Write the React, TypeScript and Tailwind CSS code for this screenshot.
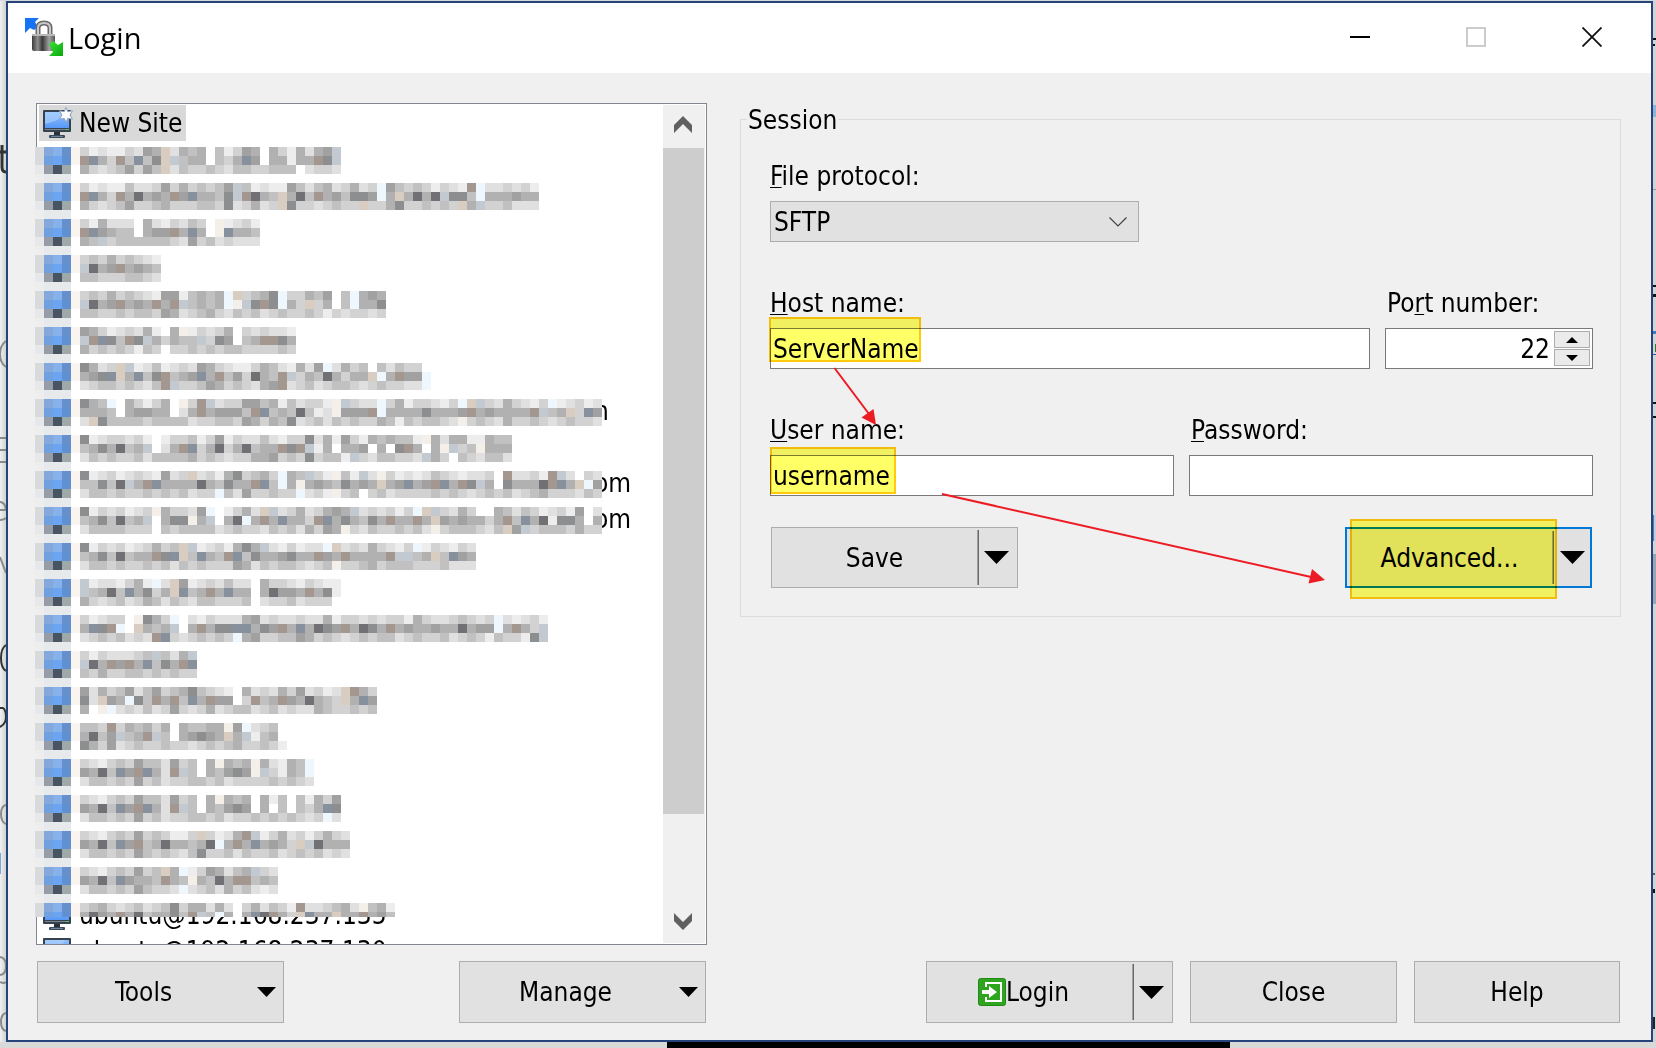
import { useState } from 'react';
import type { ReactNode } from 'react';

// one character is one 9px block of a censored entry
const blockColors: { [key: string]: string } = {
  a: '#ededed',
  b: '#e0e0e0',
  c: '#d2d2d2',
  d: '#c2c1c1',
  e: '#b1b1b1',
  f: '#a1a1a2',
  g: '#8d8e90',
  h: '#707075',
  p: '#f5efe9',
  s: '#eff7fe',
  t: '#c2c9d1',
  u: '#87919d',
  v: '#d9ccc1',
  w: '#a4978f',
};

interface Site {
  blocks: string[];
  tail?: string;
  name?: string;
}

const sites: Site[] = [
  {
    blocks: [
      'cabaacbfevbede.dacfe.ecaebeft',
      'wuecwdudgvtdee.dceuf.eeaeewgt',
      'ecbcdfcfdvbdccdcbddccddd.bccb',
    ],
  },
  {
    blocks: [
      'cabaadbbcfcecdcdftdabaafdbdebcebcsfdcdcacbawsbbcbca',
      'wuecwehefewfueedgtwhedvehdwefdggfsevehehtggdseeefee',
      'ecbcdfccdecccddcgbcebcvgccbcdccvccegccdcdcvetccdbbb',
    ],
  },
  {
    blocks: ['caebbb.ebacbdc.pabca', 'wufedd.effweue.pueed', 'edtcddddddcbfcdbcbbb'],
  },
  {
    blocks: ['cdcecdcba', 'thefwefed', 'ddcccddcb'],
  },
  {
    blocks: [
      'cdcecdcbaffadedesvcdegsccedf.dsefe',
      'thefwefewewtdedesptgwgsecvce.dseeg',
      'ddccdcddcfebcdecbdcdbcdccdcacbccbc',
    ],
  },
  {
    blocks: ['fecabcbea.epacbce.cbcbba', 'twugdwgteceddtcgf.dewwge', 'ecdcdcadc.ccdcdcddccccdc'],
  },
  {
    blocks: [
      'gebcvtabdabcbfecbaacedbaebfsbecd.dbdcc.',
      'efguveudgwdefuewdfchedwtcedheceevsewffs',
      'bcddcdcbdwtccdfecdcbefwbcdbcddcbcdccbbs',
    ],
  },
  {
    blocks: [
      'geds.ecace.pcwtbccffdeadbccaptcbbsceaccbacsvtcbecbacsabcab',
      'eeed.effee.bewefffdwudedhdabpfffwseeeegeeefwefeeeewtdevcuf',
      'bvgddddcddddbccddcfecedgbcdbdcdccedadcddcbpcdcbeccdcbcdccb',
    ],
    tail: 'm',
  },
  {
    blocks: [
      'gabccbca.accdacfacbbdbaccgbeafcaededdapebeeaaedd',
      'degehdet.bewucehcehdeewgwtae.eef.e.gwe.eptcdpeee',
      'bdcdccdbddddecdcbcceefcdcgcddatcbddccbtec.dcbddb',
    ],
  },
  {
    blocks: [
      'gabcabcbafbcvbcaegcdecsedtcapdatbpcababdcbabbc.wbbcawtb.cb',
      'ddgdhtewueeeehedgeewudsepefedgefevefuefwuewgte.geeehwuevsf',
      'bddcdccdcdcdbccsdbfccdccsbcapcd.cdbccccdcdcbcdcdbcdecccbdc',
    ],
    tail: 'om',
  },
  {
    blocks: [
      'gacbcabcpeccbfs.acebvtbcebcefetbcbcacsvtcbec..edbdcabcaf.b',
      'degdhdet.eggpet.ehseweueecwuegedgeweewevfefeecewduehagge.e',
      'bddddccc.dcddddbcdccbdcdbecfepcbdccdcdbpcdddcbdvftcdddcecc',
    ],
    tail: 'om',
  },
  {
    blocks: [
      'gacbcabcecdvtabcaegetbacabbsvbcbecbacsacbacb',
      'degdhdeewguvduedwudgeefgeewfeweeeewttdevdufe',
      'bddcdccdcdbdcdcccfebdcddcbcdpccdecdddcccdbbb',
    ],
  },
  {
    blocks: [
      'tabbaceasbvfabcbdbb.eccbacbaa',
      'tdehduegcevudeweuee.ehffewega',
      'ecbcdbcedbdcbddcccd.bccdbccc.',
    ],
  },
  {
    blocks: [
      'cabcc.pgecs.bacbbbefbcbbcbbeaccbcbccaecbbcdcbcsbabca',
      'eugws.vedet.ewegguuegfweuehgfwehgewefeefeeheffsewect',
      'bcdcdbcbwucbcdcdcsefccddfecdcbcdcddbcdccdbcdcadccagt',
    ],
  },
  {
    blocks: ['cacbbbcdtdbet', 'thewfweudgewu', 'dceccddcdcdcc'],
  },
  {
    blocks: [
      'fbecdfbdfcdegdcba.ebcbecfbcabvwec',
      'gbvfesgdwewduewff.cwdewfehedcveuf',
      'e.psbcbdbcfcbcebcddbcdbcbbedccdcd',
    ],
  },
  {
    blocks: ['ddcwcedece.eddeepfsbcd.', 'ehdftdewtd.efgfevetade.', 'gecfbcdccdccbcdcdeccdca'],
  },
  {
    blocks: ['cbacdcfddbfcd.epedepebaeds', 'fehdufwuebwtd.edfgfptcaeds', 'bddcdcfcdbccddcdbccccdcdcb'],
  },
  {
    blocks: [
      'cbacdcfddbfcd.epede.ead.daecf',
      'fehdufwuebwtd.edfgf.e.d.dceug',
      'bddcdcfcdbccddcdbccdcdcdcbcsb',
    ],
  },
  {
    blocks: [
      'cbacdcfcdcaacvcabewtacebcacecb',
      'fehdufwdeheedehseweuefecvtheee',
      'bddcdcfdcdcbdgccdbdccdbcdcdbcb',
    ],
  },
  {
    blocks: ['cbacdcfcdvesacfebdetcb', 'fehdufeedwedpedhewwded', 'bddcdcfdccbsbcdbecdbab'],
  },
  {
    blocks: ['cdecbcdbcdgceebeb.cebdcawbbcdebpdea', 'ehfewehdeegdwtdse.euhwecvueeveewefd'],
    name: 'ubuntu@192.168.237.135',
  },
];

// the censored monitor icon, same blocks on every row
const iconBlocks = [
  ['#d8dadb', '#85a8dc', '#87b1ea', '#6690cb'],
  ['#d8dadb', '#70a0df', '#6ba4f0', '#6190d0'],
  ['#e6e8ea', '#979da6', '#485461', '#a0a9aa'],
  ['#eeeeee', '#e7eaec', '#e7e9eb', '#e7eaec'],
];

function Mosaic({ blocks, height }: { blocks: string[]; height: number }) {
  const cols = blocks[0].length;
  const width = (cols + 5) * 9;
  return (
    <svg
      aria-hidden="true"
      width={width}
      height={height}
      viewBox={`0 0 ${width} ${height}`}
      shapeRendering="crispEdges"
      className="relative z-10 mt-1.5 block shrink-0 max-w-none"
    >
      <rect width={width} height={height} fill="#ffffff" />
      {iconBlocks.map((line, y) =>
        line.map((fill, x) => <rect key={`${x}-${y}`} x={x * 9} y={y * 9} width="9" height="9" fill={fill} />),
      )}
      <rect x="36" y="0" width="9" height="18" fill="#f9f4f0" />
      {blocks.map((line, y) =>
        line
          .split('')
          .map((c, x) =>
            c === '.' ? null : (
              <rect key={`${x}-${y}`} x={45 + x * 9} y={y * 9} width="9" height="9" fill={blockColors[c]} />
            ),
          ),
      )}
    </svg>
  );
}

function MonitorIcon({ star }: { star?: boolean }) {
  return (
    <svg width="30" height="32" viewBox="0 0 30 32" className="shrink-0">
      <defs>
        <linearGradient id="screen" x1="0" y1="0" x2="0" y2="1">
          <stop offset="0" stopColor="#8fc0fb" />
          <stop offset="1" stopColor="#5898f6" />
        </linearGradient>
      </defs>
      <rect x="0" y="3" width="28" height="22" rx="1" fill="#36424f" />
      <rect x="2" y="5" width="24" height="16" fill="url(#screen)" />
      <path d="M2 5h20C20 12 10 15 2 17z" fill="#b0d4ff" opacity=".6" />
      <rect x="2" y="22" width="24" height="1" fill="#7a838d" />
      <rect x="23" y="22" width="3" height="1" fill="#52d048" />
      <rect x="11" y="25" width="6" height="3" fill="#27313c" />
      <rect x="6" y="28" width="16" height="3" rx="1" fill="#3a4857" />
      <rect x="8" y="29" width="12" height="1" fill="#71869c" />
      {star && (
        <path
          d="M23 .5l1.800 4.200 4.700-.900-2.500 4.200 2.500 4.200-4.700-.900L23 15.500l-1.800-4.200-4.700.900L19 8l-2.500-4.200 4.700.900z"
          fill="#ffffff"
          stroke="#8da4c4"
          strokeWidth="1"
        />
      )}
    </svg>
  );
}

function AppIcon() {
  return (
    <svg width="40" height="40" viewBox="0 0 40 40">
      <defs>
        <linearGradient id="body" x1="0" y1="0" x2="1" y2="0">
          <stop offset="0" stopColor="#3c3c3c" />
          <stop offset=".25" stopColor="#8f8f8f" />
          <stop offset=".45" stopColor="#3a3a3a" />
          <stop offset=".75" stopColor="#a3a3a3" />
          <stop offset="1" stopColor="#555555" />
        </linearGradient>
        <linearGradient id="green" x1="0" y1="0" x2="1" y2="1">
          <stop offset="0" stopColor="#3ee23a" />
          <stop offset="1" stopColor="#06a808" />
        </linearGradient>
      </defs>
      <path d="M1 0h14l-4 4 3 5-4 3-4-2-5 5z" fill="#1673f5" />
      <path d="M14 18V10q0-5 6-5t6 5v8" fill="none" stroke="#6a6a6a" strokeWidth="5" />
      <path d="M14 18V10q0-5 6-5t6 5v8" fill="none" stroke="#c9c9c9" strokeWidth="2" />
      <rect x="8" y="16" width="23" height="17" rx="2" fill="url(#body)" />
      <rect x="8" y="16" width="23" height="2" rx="1" fill="#b8b8b8" />
      <path d="M25 26l4-3 5 4 5-3v14H25l4-4z" fill="url(#green)" />
    </svg>
  );
}

function LoginIcon() {
  return (
    <svg width="28" height="28" viewBox="0 0 28 28" className="shrink-0">
      <rect x=".5" y=".5" width="27" height="27" rx="2" fill="#2fa51f" stroke="#228a17" />
      <path d="M8 9V5h15v18H8v-4" fill="none" stroke="#ffffff" strokeWidth="2" />
      <path d="M4 12h7V8l8 6-8 6v-4H4z" fill="#ffffff" />
    </svg>
  );
}

function Triangle({ small }: { small?: boolean }) {
  return small ? (
    <svg width="19" height="10" viewBox="0 0 19 10">
      <path d="M0 0h19L9.500 10z" fill="#000000" />
    </svg>
  ) : (
    <svg width="25" height="13" viewBox="0 0 25 13">
      <path d="M0 0h25L12.500 13z" fill="#000000" />
    </svg>
  );
}

function MenuButton({ label }: { label: string }) {
  return (
    <button className="flex h-[62px] w-[247px] items-center border border-[#adadad] bg-[#e1e1e1]">
      <span className="flex-1 text-center">{label}</span>
      <span className="flex w-[34px] justify-center">
        <Triangle small />
      </span>
    </button>
  );
}

function SplitButton({ label, icon, focused }: { label: string; icon?: ReactNode; focused?: boolean }) {
  return (
    <div
      className={`flex w-[247px] bg-[#e1e1e1] ${icon ? 'h-[62px]' : 'h-[61px]'} ${
        focused ? 'border-2 border-[#0078d7]' : 'border border-[#adadad]'
      }`}
    >
      <button className={`flex flex-1 items-center justify-center ${icon ? 'pr-3' : ''}`}>
        {icon}
        {label}
      </button>
      <span className="my-0.5 w-0.5 border-l border-[#a0a0a0] bg-[#696969]" />
      <button
        aria-label={`${label} options`}
        className={`flex items-center justify-center ${focused ? 'w-9' : 'w-[38px] pr-1'}`}
      >
        <Triangle />
      </button>
    </div>
  );
}

// underlines the access key of a label
function Label({ htmlFor, before = '', letter, after }: { htmlFor: string; before?: string; letter: string; after: string }) {
  return (
    <label htmlFor={htmlFor} className="mb-2.5 block leading-[30px]">
      {before}
      <span className="underline decoration-1 underline-offset-2">{letter}</span>
      {after}
    </label>
  );
}

const inputClass = 'block h-[41px] w-full border border-[#7a7a7a] bg-white px-0.5 outline-none';
const markClass = 'pointer-events-none absolute border-2 border-[#ffc90e] bg-[#ffff66] mix-blend-multiply';

export default function App() {
  const [protocol, setProtocol] = useState('SFTP');
  const [host, setHost] = useState('ServerName');
  const [port, setPort] = useState('22');
  const [user, setUser] = useState('username');
  const [password, setPassword] = useState('');

  return (
    <div className="flex h-screen flex-col overflow-hidden bg-[#e4e4e4] font-['DejaVu_Sans_Condensed','DejaVu_Sans',sans-serif] text-[26px] leading-[30px] text-black">
      <div className="h-px shrink-0 bg-[#d5d9dc]" />
      <div className="flex min-h-0 flex-1">
        {/* Page behind, left edge */}
        <div className="w-1.5 shrink-0 overflow-hidden bg-gradient-to-r from-[#f0f0f0] to-[#d2d2d2]">
          <svg aria-hidden="true" width="6" height="1041" viewBox="0 0 6 1041" fill="none" strokeWidth="2">
            <g stroke="#333333">
              <path d="M0 151h6M2 144v22q0 5 4 5" strokeWidth="3" />
              <path d="M6 644q-5 3-5 13t5 13" />
              <path d="M0 707h3q3 2 3 9t-6 10" />
            </g>
            <g stroke="#8a8a8a">
              <path d="M6 340q-6 4-6 13t6 13" />
              <path d="M0 437h6M0 449h6M0 461h6" />
              <path d="M0 501q5 0 6 8H0M0 519q4 0 6-2" />
              <path d="M0 556l6 16" />
              <path d="M6 804q-5 1-5 9t5 10" />
              <path d="M0 956q6 1 6 9t-6 9M0 981q4 2 6 0" />
              <path d="M6 1012q-5 1-5 9t5 9" />
            </g>
            <rect y="852" width="1" height="21" fill="#7ea6dc" />
          </svg>
        </div>

        {/* Dialog */}
        <div className="flex min-w-0 flex-1 flex-col border-2 border-[#26447c] bg-[#f0f0f0]">
          {/* Title bar */}
          <header className="flex h-[70px] shrink-0 items-center bg-white pr-px pl-4">
            <AppIcon />
            <h1 className="flex-1 pl-1 font-['Open_Sans','Noto_Sans',sans-serif] text-[29px]">Login</h1>
            <button aria-label="Minimize" className="mb-0.5 flex h-[68px] w-[116px] items-center justify-center">
              <span className="h-0.5 w-5 bg-black" />
            </button>
            <button
              aria-label="Maximize"
              disabled
              className="mb-0.5 flex h-[68px] w-[116px] items-center justify-center"
            >
              <span className="size-5 border-2 border-[#cccccc]" />
            </button>
            <button aria-label="Close window" className="mb-0.5 flex h-[68px] w-[116px] items-center justify-center">
              <svg width="20" height="20" viewBox="0 0 20 20">
                <path d="M.5.5l19 19M19.500.5l-19 19" stroke="#111111" strokeWidth="1.800" />
              </svg>
            </button>
          </header>

          <div className="flex min-h-0 flex-1 gap-[33px] pt-[30px] pr-[30px] pb-[17px] pl-7">
            {/* Sites */}
            <div className="flex w-[671px] shrink-0 flex-col gap-4">
              <div className="flex min-h-0 flex-1 border border-[#828790] bg-white">
                <ul className="-ml-0.5 min-w-0 flex-1 overflow-hidden pt-px">
                  <li className="flex h-9">
                    <span className="ml-1 flex items-center bg-[#d9d9d9] pr-1 pl-1">
                      <MonitorIcon star />
                      <span className="pl-1.5">New Site</span>
                    </span>
                  </li>
                  {sites.map((site, i) => (
                    <li key={i} className="relative flex h-9">
                      {site.name && (
                        <span className="absolute inset-y-0 left-2 flex items-center gap-1.5">
                          <MonitorIcon />
                          {site.name}
                        </span>
                      )}
                      <Mosaic blocks={site.blocks} height={site.name ? 14 : 36} />
                      {site.tail && (
                        <span className={`leading-9 ${site.tail === 'm' ? '-ml-4' : '-ml-2'}`}>{site.tail}</span>
                      )}
                    </li>
                  ))}
                  <li className="flex h-9 items-center gap-1.5 pl-2">
                    <MonitorIcon />
                    ubuntu@192.168.237.130
                  </li>
                </ul>
                <div className="my-px mr-px flex w-[42px] flex-col items-center bg-[#f0f0f0]">
                  <button aria-label="Scroll up" className="flex h-[43px] shrink-0 items-center pr-0.5 pb-1">
                    <svg width="18" height="17" viewBox="0 0 18 17">
                      <path d="M0 9l9-9 9 9v8L9 8l-9 9z" fill="#606060" />
                    </svg>
                  </button>
                  <div className="mr-px h-[666px] w-[41px] bg-[#cdcdcd]" />
                  <button aria-label="Scroll down" className="mt-auto flex h-[43px] shrink-0 items-center pr-0.5">
                    <svg width="18" height="17" viewBox="0 0 18 17">
                      <path d="M0 8l9 9 9-9V0L9 9 0 0z" fill="#606060" />
                    </svg>
                  </button>
                </div>
              </div>
              <div className="flex justify-between px-px">
                <MenuButton label="Tools" />
                <MenuButton label="Manage" />
              </div>
            </div>

            {/* Session */}
            <div className="flex min-w-0 flex-1 flex-col justify-between">
              <fieldset className="min-w-0 border border-[#dcdcdc]">
                <legend className="ml-1.5 px-px pt-0.5 leading-[30px]">Session</legend>
                <div className="relative pt-[26px] pr-[27px] pb-7 pl-[29px]">
                  <div className="w-[369px]">
                    <Label htmlFor="protocol" letter="F" after="ile protocol:" />
                    <div className="relative">
                      <select
                        id="protocol"
                        value={protocol}
                        onChange={(e) => setProtocol(e.target.value)}
                        className="block h-[41px] w-full appearance-none border border-[#adadad] bg-[#e1e1e1] px-[3px] outline-none"
                      >
                        <option>SFTP</option>
                        <option>SCP</option>
                        <option>FTP</option>
                        <option>WebDAV</option>
                      </select>
                      <svg
                        width="18"
                        height="10"
                        viewBox="0 0 18 10"
                        className="pointer-events-none absolute top-4 right-3"
                      >
                        <path d="M.5.5L9 9 17.500.5" fill="none" stroke="#404040" strokeWidth="1.200" />
                      </svg>
                    </div>
                  </div>

                  <div className="mt-[46px] flex gap-[15px]">
                    <div className="min-w-0 flex-1">
                      <Label htmlFor="host" letter="H" after="ost name:" />
                      <div className="relative">
                        <input id="host" value={host} onChange={(e) => setHost(e.target.value)} className={inputClass} />
                        <div className={`${markClass} -top-[11px] -left-px h-[45px] w-[152px]`} />
                      </div>
                    </div>
                    <div className="w-[208px]">
                      <div className="pl-0.5">
                        <Label htmlFor="port" before="Po" letter="r" after="t number:" />
                      </div>
                      <div className="flex h-[41px] border border-[#7a7a7a] bg-white p-0.5">
                        <input
                          id="port"
                          inputMode="numeric"
                          value={port}
                          onChange={(e) => setPort(e.target.value)}
                          className="min-w-0 flex-1 pr-1 text-right outline-none"
                        />
                        <div className="flex w-[36px] flex-col gap-px">
                          <button
                            aria-label="Increase port"
                            onClick={() => setPort(String(Number(port) + 1))}
                            className="flex flex-1 items-center justify-center border border-[#adadad] bg-[#ebebeb]"
                          >
                            <svg width="12" height="6" viewBox="0 0 12 6">
                              <path d="M0 6h12L6 0z" fill="#000000" />
                            </svg>
                          </button>
                          <button
                            aria-label="Decrease port"
                            onClick={() => setPort(String(Number(port) - 1))}
                            className="flex flex-1 items-center justify-center border border-[#adadad] bg-[#ebebeb]"
                          >
                            <svg width="12" height="6" viewBox="0 0 12 6">
                              <path d="M0 0h12L6 6z" fill="#000000" />
                            </svg>
                          </button>
                        </div>
                      </div>
                    </div>
                  </div>

                  <div className="mt-[46px] grid grid-cols-2 gap-[15px]">
                    <div>
                      <Label htmlFor="user" letter="U" after="ser name:" />
                      <div className="relative">
                        <input id="user" value={user} onChange={(e) => setUser(e.target.value)} className={inputClass} />
                        <div className={`${markClass} -top-2 left-0 h-[47px] w-[126px]`} />
                      </div>
                    </div>
                    <div>
                      <div className="pl-0.5">
                        <Label htmlFor="password" letter="P" after="assword:" />
                      </div>
                      <input
                        id="password"
                        type="password"
                        value={password}
                        onChange={(e) => setPassword(e.target.value)}
                        className={inputClass}
                      />
                    </div>
                  </div>

                  <div className="mt-[31px] flex justify-between px-px">
                    <SplitButton label="Save" />
                    <div className="relative">
                      <SplitButton label="Advanced..." focused />
                      <div className={`${markClass} -top-2 left-[5px] h-20 w-[207px]`} />
                    </div>
                  </div>

                  {/* Arrows between the steps */}
                  <svg aria-hidden="true" className="pointer-events-none absolute inset-0 size-full">
                    <g fill="#ed1c24" stroke="#ed1c24">
                      <path d="M93.500 233L128 279" strokeWidth="2" />
                      <path d="M135 290l-14.500-7.500L132.500 274z" stroke="none" />
                      <path d="M201 359L570 442" strokeWidth="2" />
                      <path d="M584 445l-16.500 3.500L571 434z" stroke="none" />
                    </g>
                  </svg>
                </div>
              </fieldset>

              <div className="flex justify-end gap-[17px] pr-px">
                <SplitButton label="Login" icon={<LoginIcon />} />
                <button className="w-[207px] border border-[#adadad] bg-[#e1e1e1]">Close</button>
                <button className="w-[206px] border border-[#adadad] bg-[#e1e1e1]">Help</button>
              </div>
            </div>
          </div>
        </div>

        {/* Page behind, right edge */}
        <svg aria-hidden="true" width="3" height="1041" viewBox="0 0 3 1041" className="shrink-0">
          <rect width="3" height="1041" fill="#d3d3d4" />
          <rect y="37" width="3" height="2" fill="#111111" />
          <rect y="43" width="2" height="2" fill="#111111" />
          <rect y="104" width="3" height="12" fill="#8fb4d6" />
          <rect y="188" width="3" height="1" fill="#999999" />
          <rect y="284" width="3" height="2" fill="#111111" />
          <rect y="293" width="3" height="3" fill="#111111" />
          <rect y="330" width="3" height="3" fill="#3f78c8" />
          <rect x="2" y="343" width="1" height="8" fill="#2d7a2d" />
          <rect y="353" width="3" height="1" fill="#2b5aa0" />
          <rect y="401" width="3" height="2" fill="#111111" />
          <rect y="415" width="3" height="2" fill="#111111" />
          <rect y="514" width="3" height="26" fill="#c3cddd" />
          <rect y="514" width="1" height="26" fill="#5a78a8" />
          <rect y="553" width="3" height="50" fill="#99a5b5" />
          <rect y="872" width="2" height="2" fill="#555555" />
          <rect y="888" width="2" height="4" fill="#111111" />
          <rect y="1016" width="2" height="12" fill="#222222" />
        </svg>
      </div>
      <div className="flex h-1.5 shrink-0 bg-[#d9d9d9]">
        <div className="ml-[40.300%] w-[34%] bg-black" />
      </div>
    </div>
  );
}
